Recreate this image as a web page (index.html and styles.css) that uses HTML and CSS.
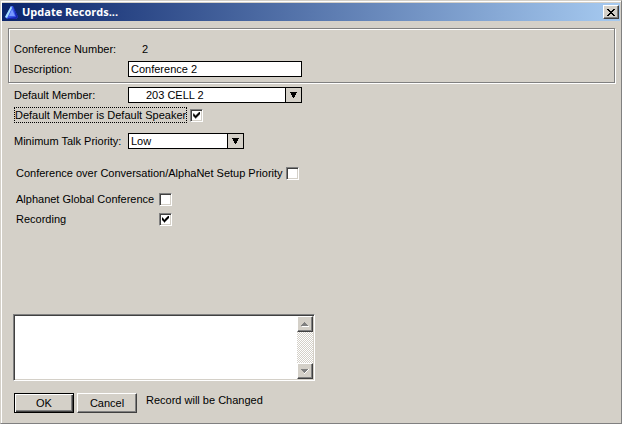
FILE: index.html
```html
<!DOCTYPE html>
<html lang="en">
<head>
    <meta charset="UTF-8">
    <meta name="viewport" content="width=device-width, initial-scale=1.0">
    <title>Update Records...</title>
    <link rel="stylesheet" href="styles.css">
</head>
<body>
    <form class="window">
        <header class="title-bar">
            <svg class="app-icon" width="14" height="14" viewBox="0 0 14 14">
                <path d="M6 1 L0 12 L2 14 L11 14 L13 12 L8 1 Z" fill="#3858e8"/>
                <path d="M6 1 L0 12 L2 13 L7 3 Z" fill="#a8e0ff"/>
                <path d="M7 4 L4 11 L10 11 Z" fill="#7898ff"/>
                <path d="M8 1 L13 12 L11 14 L2 14 L3 13 L11 12 Z" fill="#1824b0"/>
            </svg>
            <h1>Update Records...</h1>
            <button type="button" class="close-btn" aria-label="Close">
                <svg width="8" height="7" viewBox="0 0 8 7" shape-rendering="crispEdges">
                    <path d="M0 0h2v1h1v1h2v-1h1v-1h2v1h-1v1h-1v1h-1v1h1v1h1v1h1v1h-2v-1h-1v-1h-2v1h-1v1h-2v-1h1v-1h1v-1h1v-1h-1v-1h-1v-1h-1z" fill="#000"/>
                </svg>
            </button>
        </header>

        <main>
            <!-- Conference details -->
            <section class="group-box">
                <div class="row">
                    <span class="caption">Conference Number:</span>
                    <output class="number">2</output>
                </div>
                <div class="row">
                    <label class="caption" for="description">Description:</label>
                    <input type="text" id="description" class="text-box" value="Conference 2">
                </div>
            </section>

            <!-- Settings -->
            <section class="settings">
                <div class="row">
                    <label class="caption" for="member">Default Member:</label>
                    <div class="drop-down wide">
                        <select id="member" class="indented">
                            <option>203 CELL 2</option>
                        </select>
                        <span class="arrow"><svg width="7" height="6" viewBox="0 0 7 6" shape-rendering="crispEdges"><path d="M0 0h7v1h-1v2h-1v2h-1v1h-1v-1h-1v-2h-1v-2h-1z"/></svg></span>
                    </div>
                </div>
                <div class="row check-row">
                    <label class="focused" for="speaker">Default Member is Default Speaker</label>
                    <input type="checkbox" id="speaker" checked>
                </div>
                <div class="row spaced">
                    <label class="caption" for="priority">Minimum Talk Priority:</label>
                    <div class="drop-down">
                        <select id="priority">
                            <option>Low</option>
                        </select>
                        <span class="arrow"><svg width="7" height="6" viewBox="0 0 7 6" shape-rendering="crispEdges"><path d="M0 0h7v1h-1v2h-1v2h-1v1h-1v-1h-1v-2h-1v-2h-1z"/></svg></span>
                    </div>
                </div>
                <div class="row check-row option apart">
                    <label for="setup">Conference over Conversation/AlphaNet Setup Priority</label>
                    <input type="checkbox" id="setup">
                </div>
                <div class="row check-row option spaced">
                    <label class="option-name" for="global">Alphanet Global Conference</label>
                    <input type="checkbox" id="global">
                </div>
                <div class="row check-row option">
                    <label class="option-name" for="recording">Recording</label>
                    <input type="checkbox" id="recording" checked>
                </div>
            </section>
        </main>

        <footer>
            <div class="message-box">
                <textarea aria-label="Messages"></textarea>
                <div class="scroll-bar">
                    <button type="button" aria-label="Scroll up" disabled>
                        <svg width="8" height="5" viewBox="0 0 8 5" shape-rendering="crispEdges"><path d="M1 4h7v1h-7z" fill="#fff"/><path d="M3 0h1v1h1v1h1v1h1v1h-7v-1h1v-1h1v-1h1z" fill="#808080"/></svg>
                    </button>
                    <button type="button" aria-label="Scroll down" disabled>
                        <svg width="8" height="5" viewBox="0 0 8 5" shape-rendering="crispEdges"><path d="M7 0h1v1h-1v1h-1v1h-1v1h-1v1h-1v-1h1z" fill="#fff"/><path d="M0 0h7v1h-1v1h-1v1h-1v1h-1v-1h-1v-1h-1v-1h-1z" fill="#808080"/></svg>
                    </button>
                </div>
            </div>
            <div class="actions">
                <button type="submit" class="btn default">OK</button>
                <button type="button" class="btn">Cancel</button>
                <span class="status">Record will be Changed</span>
            </div>
        </footer>
    </form>
</body>
</html>
```
FILE: styles.css
```css
* {
    box-sizing: border-box;
    margin: 0;
    padding: 0;
}

body {
    background-color: #d4d0c8;
    color: #000;
    font-family: "Liberation Sans", Arial, sans-serif;
    font-size: 11px;
    line-height: 14px;
}

button, input, select, textarea {
    font: inherit;
    color: inherit;
    border-radius: 0;
}

svg {
    display: block;
}

.window {
    display: flex;
    flex-direction: column;
    min-height: 100vh;
    padding: 2px 1px 0;
    border: 1px solid #808080;
    border-top-color: #d4d0c8;
    border-left-color: #d4d0c8;
    box-shadow: inset 1px 1px 0 #fff;
}

/* Title bar */
.title-bar {
    display: flex;
    align-items: center;
    gap: 3px;
    height: 18px;
    padding: 0 1px 0 3px;
    background: linear-gradient(to right, #0a246a, #a6caf0);
}

.title-bar h1 {
    flex: 1;
    color: #fff;
    font-family: "Open Sans", "DejaVu Sans", sans-serif;
    font-size: 11px;
    font-weight: bold;
}

.close-btn {
    display: grid;
    place-items: center;
    width: 16px;
    height: 14px;
}

/* Raised buttons */
.close-btn, .btn, .scroll-bar button {
    background-color: #d4d0c8;
    border: 1px solid #404040;
    border-top-color: #fff;
    border-left-color: #fff;
    box-shadow: inset -1px -1px 0 #808080;
}

main {
    padding: 7px 5px 0 6px;
}

.group-box {
    display: grid;
    gap: 4px;
    padding: 12px 5px 5px;
    border: 1px solid #808080;
    box-shadow: 1px 1px 0 #fff, inset 1px 1px 0 #fff;
}

.settings {
    display: grid;
    gap: 4px;
    padding: 4px 6px;
}

.row {
    display: flex;
    align-items: center;
    height: 16px;
}

.spaced {
    margin-top: 6px;
}

.apart {
    margin-top: 12px;
}

.caption {
    width: 114px;
}

.number {
    padding-left: 14px;
}

.text-box {
    width: 174px;
    height: 16px;
    padding: 0 2px;
    background-color: #fff;
    border: 1px solid #000;
    outline: none;
}

/* Drop-downs */
.drop-down {
    display: grid;
    grid-template-columns: 1fr 16px;
    width: 116px;
    height: 16px;
    border: 1px solid #000;
}

.drop-down.wide {
    width: 174px;
}

.drop-down select {
    grid-area: 1 / 1 / 2 / 3;
    appearance: none;
    padding: 0 18px 0 2px;
    background-color: #fff;
    border: none;
    outline: none;
}

.drop-down select.indented {
    padding-left: 17px;
}

.arrow {
    grid-area: 1 / 2;
    z-index: 1;
    display: grid;
    place-items: center;
    background-color: #d4d0c8;
    border-left: 1px solid #000;
    pointer-events: none;
}

/* Tick boxes */
.check-row {
    gap: 3px;
    white-space: nowrap;
}

.focused {
    border: 1px dotted #000;
}

.option {
    padding-left: 2px;
}

.option-name {
    width: 140px;
}

input[type="checkbox"] {
    appearance: none;
    display: grid;
    place-items: center;
    width: 13px;
    height: 13px;
    background-color: #fff;
    border: 1px solid #fff;
    border-top-color: #808080;
    border-left-color: #808080;
    box-shadow: inset 1px 1px 0 #404040, inset -1px -1px 0 #d4d0c8;
}

input[type="checkbox"]:checked::before {
    content: "";
    width: 7px;
    height: 7px;
    background-color: #000;
    clip-path: polygon(0 2px, 1px 2px, 1px 3px, 2px 3px, 2px 4px, 3px 4px, 3px 3px, 4px 3px, 4px 2px, 5px 2px, 5px 1px, 6px 1px, 6px 0, 7px 0, 7px 3px, 6px 3px, 6px 4px, 5px 4px, 5px 5px, 4px 5px, 4px 6px, 3px 6px, 3px 7px, 2px 7px, 2px 6px, 1px 6px, 1px 5px, 0 5px);
}

/* Message area and buttons */
footer {
    margin-top: auto;
    padding: 0 11px 10px;
}

.message-box {
    display: flex;
    width: 302px;
    height: 67px;
    padding: 1px;
    background-color: #fff;
    border: 1px solid #fff;
    border-top-color: #808080;
    border-left-color: #808080;
    box-shadow: inset 1px 1px 0 #404040, inset -1px -1px 0 #d4d0c8;
}

.message-box textarea {
    flex: 1;
    background: none;
    border: none;
    outline: none;
    resize: none;
}

.scroll-bar {
    display: flex;
    flex-direction: column;
    justify-content: space-between;
    width: 16px;
    background: repeating-conic-gradient(#fff 0 25%, #d4d0c8 0 50%) 0 0 / 2px 2px;
}

.scroll-bar button {
    display: grid;
    place-items: center;
    width: 16px;
    height: 16px;
}

.actions {
    display: flex;
    gap: 3px;
    margin-top: 12px;
    padding-left: 1px;
}

.btn {
    width: 60px;
    height: 20px;
}

.btn.default {
    border-color: #000;
    box-shadow: inset 1px 1px 0 #fff, inset -1px -1px 0 #404040, inset -2px -2px 0 #808080;
}

.status {
    padding-left: 6px;
}
```
